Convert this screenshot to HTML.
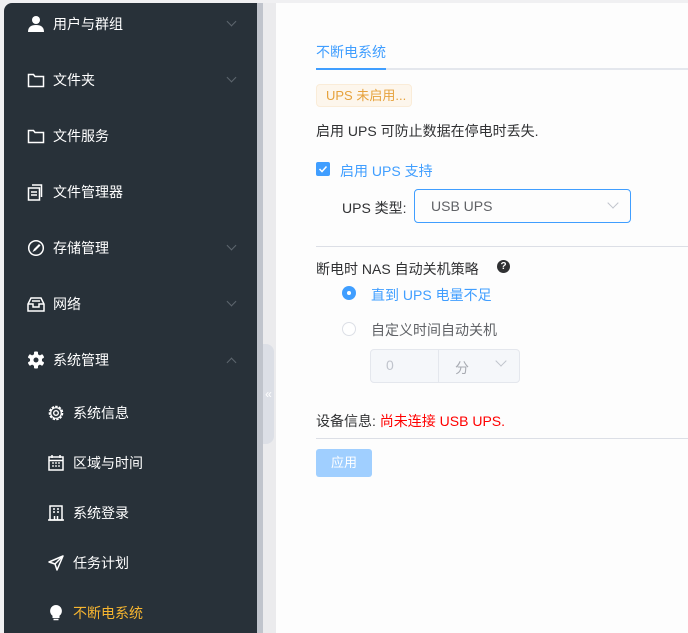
<!DOCTYPE html>
<html><head><meta charset="utf-8"><style>
*{box-sizing:border-box;margin:0;padding:0}
html,body{width:688px;height:633px;overflow:hidden}
body{background:#f0f0f2;font-family:"Liberation Sans","Noto Sans CJK SC",sans-serif;font-size:14px;position:relative}
.sb{position:absolute;left:4px;top:3px;width:253px;height:630px;background:#283139;border-top-left-radius:8px}
.it{position:absolute;left:0;width:253px;color:#fff;font-size:14px;height:20px;line-height:20px}
.it svg{position:absolute;top:1px}
.it .t{position:absolute}
.arr{position:absolute;left:224px;top:4px;width:7px;height:7px;border-right:1px solid #5d666e;border-bottom:1px solid #5d666e;transform:rotate(45deg)}
.arr.up{transform:rotate(-135deg);top:9px}
.sc{position:absolute;left:257px;top:3px;width:6px;height:630px;background:#c0c4cc}
.gut{position:absolute;left:263px;top:3px;width:13px;height:630px;background:#ebebed}
.hd{position:absolute;left:263px;top:344px;width:11px;height:100px;background:#dcdfe6;border-radius:0 8px 8px 0;color:#fff;font-size:12px;text-align:center;line-height:100px}
.main{position:absolute;left:276px;top:3px;width:412px;height:630px;background:#fdfdfd}
.a{position:absolute}
</style></head><body>
<div class="sb">
<div class="it" style="top:11px"><svg style="left:23px" width="18" height="18" viewBox="0 0 18 18"><circle cx="9" cy="5" r="4" fill="#fff"/><path d="M1 17c0-5 3-7 8-7s8 2 8 7z" fill="#fff"/></svg><span class="t" style="left:49px">用户与群组</span><i class="arr"></i></div>
<div class="it" style="top:67px"><svg style="left:23px" width="18" height="18" viewBox="0 0 18 18"><path d="M1.5 3.5h5l1.5 2h8.5v10h-15z" fill="none" stroke="#fff" stroke-width="1.5"/></svg><span class="t" style="left:49px">文件夹</span><i class="arr"></i></div>
<div class="it" style="top:123px"><svg style="left:23px" width="18" height="18" viewBox="0 0 18 18"><path d="M1.5 3.5h5l1.5 2h8.5v10h-15z" fill="none" stroke="#fff" stroke-width="1.5"/></svg><span class="t" style="left:49px">文件服务</span></div>
<div class="it" style="top:179px"><svg style="left:23px" width="18" height="18" viewBox="0 0 18 18"><rect x="1.5" y="5" width="11" height="12" fill="none" stroke="#fff" stroke-width="1.5"/><path d="M5 2h9.5v12" fill="none" stroke="#fff" stroke-width="1.5"/><path d="M4 9h6M4 12h6" stroke="#fff" stroke-width="1.5"/></svg><span class="t" style="left:49px">文件管理器</span></div>
<div class="it" style="top:235px"><svg style="left:23px" width="18" height="18" viewBox="0 0 18 18"><circle cx="9" cy="9" r="7.3" fill="none" stroke="#fff" stroke-width="1.5"/><path d="M12 5l-5 5-1.5 3 3-1.5 5-5z" fill="#fff"/></svg><span class="t" style="left:49px">存储管理</span><i class="arr"></i></div>
<div class="it" style="top:291px"><svg style="left:23px" width="18" height="18" viewBox="0 0 18 18"><path d="M4 3h10l3 6v7H1V9z" fill="none" stroke="#fff" stroke-width="1.5"/><path d="M1 9h5v3h6V9h5" fill="none" stroke="#fff" stroke-width="1.5"/><path d="M5 6h8" stroke="#fff" stroke-width="1.5"/></svg><span class="t" style="left:49px">网络</span><i class="arr"></i></div>
<div class="it" style="top:347px"><svg style="left:23px" width="18" height="18" viewBox="0 0 18 18"><g fill="#fff"><rect x="7" y="0.5" width="4" height="17" rx="1"/><rect x="7" y="0.5" width="4" height="17" rx="1" transform="rotate(60 9 9)"/><rect x="7" y="0.5" width="4" height="17" rx="1" transform="rotate(120 9 9)"/><circle cx="9" cy="9" r="6"/></g><circle cx="9" cy="9" r="2.5" fill="#283139"/></svg><span class="t" style="left:49px">系统管理</span><i class="arr up"></i></div>
<div class="it" style="top:400px"><svg style="left:43px" width="18" height="18" viewBox="0 0 18 18"><circle cx="9" cy="9" r="6.5" fill="none" stroke="#fff" stroke-width="1.6" stroke-dasharray="2.5 1.2"/><circle cx="9" cy="9" r="5.3" fill="none" stroke="#fff" stroke-width="1.2"/><circle cx="9" cy="9" r="2.3" fill="none" stroke="#fff" stroke-width="1.4"/></svg><span class="t" style="left:69px">系统信息</span></div>
<div class="it" style="top:450px"><svg style="left:43px" width="18" height="18" viewBox="0 0 18 18"><rect x="2" y="3" width="14" height="13" fill="none" stroke="#fff" stroke-width="1.5"/><path d="M2 6.5h14M5 1v3M13 1v3" stroke="#fff" stroke-width="1.5"/><path d="M5 9h2M8 9h2M11 9h2M5 12h2M8 12h2M11 12h2" stroke="#fff" stroke-width="1.3"/></svg><span class="t" style="left:69px">区域与时间</span></div>
<div class="it" style="top:500px"><svg style="left:43px" width="18" height="18" viewBox="0 0 18 18"><rect x="3" y="2" width="12" height="14" fill="none" stroke="#fff" stroke-width="1.5"/><path d="M6 5h2M10 5h2M6 8h2M10 8h2M7.5 12v4M10.5 12v4M1 16h16" stroke="#fff" stroke-width="1.5"/></svg><span class="t" style="left:69px">系统登录</span></div>
<div class="it" style="top:550px"><svg style="left:43px" width="18" height="18" viewBox="0 0 18 18"><path d="M16 2L2 8l6 2 2 6z" fill="none" stroke="#fff" stroke-width="1.5" stroke-linejoin="round"/><path d="M8 10l8-8" stroke="#fff" stroke-width="1.5"/></svg><span class="t" style="left:69px">任务计划</span></div>
<div class="it" style="top:600px;color:#f6b530"><svg style="left:43px" width="18" height="18" viewBox="0 0 18 18"><path d="M9 1a6 6 0 0 0-3.5 10.8V14h7v-2.2A6 6 0 0 0 9 1z" fill="#fff"/><path d="M6.5 15.5h5" stroke="#fff" stroke-width="1.5"/></svg><span class="t" style="left:69px">不断电系统</span></div>
</div>
<div class="sc"></div><div class="gut"></div><div class="hd">«</div>
<div class="main"></div>
<div class="a" style="left:316px;top:42px;color:#409eff;font-size:14px">不断电系统</div>
<div class="a" style="left:316px;top:68px;width:372px;height:2px;background:#e4e7ed"></div>
<div class="a" style="left:316px;top:68px;width:70px;height:2px;background:#409eff"></div>
<div class="a" style="left:316px;top:84px;width:96px;height:23px;background:#fdf6ec;border:1px solid #faecd8;border-radius:4px;color:#e6a23c;font-size:13px;line-height:21px;padding-left:9px">UPS 未启用...</div>
<div class="a" style="left:316px;top:121px;color:#303133">启用 UPS 可防止数据在停电时丢失.</div>
<div class="a" style="left:316px;top:162px;width:14px;height:14px;background:#409eff;border-radius:2px"><svg width="14" height="14" viewBox="0 0 14 14"><path d="M3.5 7l2.5 2.5 4.5-5" fill="none" stroke="#fff" stroke-width="1.5"/></svg></div>
<div class="a" style="left:340px;top:161px;color:#409eff">启用 UPS 支持</div>
<div class="a" style="left:342px;top:198px;color:#303133">UPS 类型:</div>
<div class="a" style="left:414px;top:189px;width:217px;height:34px;border:1px solid #409eff;border-radius:4px;color:#606266;line-height:32px;padding-left:16px">USB UPS<i style="position:absolute;left:194px;top:9px;width:8px;height:8px;border-right:1px solid #c0c4cc;border-bottom:1px solid #c0c4cc;transform:rotate(45deg)"></i></div>
<div class="a" style="left:316px;top:246px;width:372px;height:1px;background:#dcdfe6"></div>
<div class="a" style="left:316px;top:259px;color:#303133">断电时 NAS 自动关机策略</div>
<div class="a" style="left:497px;top:260px;width:13px;height:13px;border-radius:50%;background:#303133;color:#fff;font-size:10px;font-weight:bold;text-align:center;line-height:13px">?</div>
<div class="a" style="left:342px;top:286px;width:14px;height:14px;border-radius:50%;background:#409eff"><div style="margin:5px;width:4px;height:4px;border-radius:50%;background:#fff"></div></div>
<div class="a" style="left:371px;top:285px;color:#409eff">直到 UPS 电量不足</div>
<div class="a" style="left:342px;top:322px;width:14px;height:14px;border-radius:50%;border:1px solid #dcdfe6;background:#fff"></div>
<div class="a" style="left:371px;top:320px;color:#606266">自定义时间自动关机</div>
<div class="a" style="left:370px;top:349px;width:150px;height:34px;border:1px solid #e4e7ed;border-radius:4px;background:#f5f7fa"></div>
<div class="a" style="left:438px;top:349px;width:1px;height:34px;background:#e4e7ed"></div>
<div class="a" style="left:386px;top:357px;color:#c0c4cc">0</div>
<div class="a" style="left:455px;top:358px;color:#a8abb2">分</div>
<i class="a" style="left:497px;top:357px;width:8px;height:8px;border-right:1px solid #c0c4cc;border-bottom:1px solid #c0c4cc;transform:rotate(45deg)"></i>
<div class="a" style="left:316px;top:411px;color:#303133">设备信息: <span style="color:#f00">尚未连接 USB UPS.</span></div>
<div class="a" style="left:316px;top:438px;width:372px;height:1px;background:#dcdfe6"></div>
<div class="a" style="left:316px;top:449px;width:56px;height:28px;background:#a0cfff;border-radius:3px;color:#fff;font-size:13px;text-align:center;line-height:28px">应用</div>
</body></html>
